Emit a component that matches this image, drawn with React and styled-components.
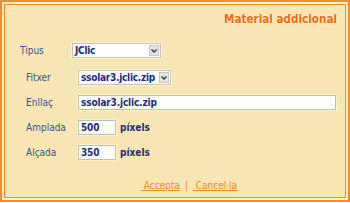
import React from 'react';
import styled, { createGlobalStyle } from 'styled-components';

const GlobalStyle = createGlobalStyle`
  html, body {
    margin: 0;
    padding: 0;
    background: #ffffff;
  }
  body {
    font-family: "DejaVu Sans Condensed", "DejaVu Sans", sans-serif;
  }
`

const Outer = styled.div`
  width: 350px;
  height: 202px;
  box-sizing: border-box;
  border: 2px solid #ff8a1e;
  background: #fdf0cc;
  padding: 2px;
`

const Inner = styled.div`
  height: 100%;
  box-sizing: border-box;
  border: 1px solid #ff8a1e;
  background: #f8e6b5;
  display: flex;
  flex-direction: column;
`

const Title = styled.h1`
  margin: 0;
  padding: 7px 8px 0 0;
  height: 20px;
  text-align: right;
  font-size: 11.6px;
  font-weight: bold;
  color: #ff6a00;
  text-shadow: 0 0 2px #fffbe8, 0 0 1px #fffbe8;
`

const Form = styled.div`
  display: flex;
  flex-direction: column;
  padding: 4px 0 0 15px;
`

const Row = styled.div`
  display: flex;
  align-items: center;
  height: ${({ h }) => h || 25}px;
  padding-left: ${({ indent }) => indent || 0}px;
`

const Label = styled.span`
  width: ${({ w }) => w}px;
  font-size: 10px;
  color: #34558a;
`

const Field = styled.input`
  box-sizing: border-box;
  width: ${({ w }) => w}px;
  height: 15px;
  padding: 0 2px;
  border: 1px solid #bdbdbd;
  outline: 1px solid #fff4c4;
  background: #ffffff;
  font-family: inherit;
  font-size: 10px;
  font-weight: bold;
  letter-spacing: -0.15px;
  color: #1e2a7a;
`

const SelectBox = styled.div`
  position: relative;
  box-sizing: border-box;
  width: ${({ w }) => w}px;
  height: 15px;
  border: 1px solid #c4c4c4;
  outline: 1px solid #fff4c4;
  background: #ffffff;
  display: flex;
  align-items: center;
  padding-left: 2px;
  font-size: 10px;
  font-weight: bold;
  letter-spacing: -0.25px;
  color: #1e2a7a;
  white-space: nowrap;
`

const ArrowButton = styled.span`
  position: absolute;
  right: 1px;
  top: 1px;
  width: 10px;
  height: 11px;
  box-sizing: border-box;
  border: 1px solid #c8c8c8;
  background: #e4e4e4;
  display: flex;
  align-items: center;
  justify-content: center;
`

const Unit = styled.span`
  margin-left: 4px;
  font-size: 10px;
  font-weight: bold;
  color: #1e2a7a;
`

const Footer = styled.div`
  margin-top: auto;
  padding: 0 0 6px 28px;
  display: flex;
  justify-content: center;
  align-items: center;
  gap: 5px;
  font-size: 10px;
  color: #ff8a1e;
`

const FooterLink = styled.a`
  color: #ff8a1e;
  text-decoration: underline;
  cursor: pointer;
`

const Select = ({ w, value }) => (
  <SelectBox w={w}>
    {value}
    <ArrowButton>
      <svg width="6" height="4" viewBox="0 0 6 4">
        <path d="M0.5 0.5 L3 3 L5.5 0.5" fill="none" stroke="#333" strokeWidth="1.3" />
      </svg>
    </ArrowButton>
  </SelectBox>
)

export default function App() {
  return (
    <>
      <GlobalStyle />
      <Outer>
        <Inner>
          <Title>Material addicional</Title>
          <Form>
            <Row h={29}>
              <Label w={52}>Tipus</Label>
              <Select w={89} value="JClic" />
            </Row>
            <Row indent={6}>
              <Label w={52}>Fitxer</Label>
              <Select w={93} value="ssolar3.jclic.zip" />
            </Row>
            <Row indent={6}>
              <Label w={52}>Enllaç</Label>
              <Field w={258} defaultValue="ssolar3.jclic.zip" />
            </Row>
            <Row indent={6}>
              <Label w={52}>Amplada</Label>
              <Field w={38} defaultValue="500" />
              <Unit>píxels</Unit>
            </Row>
            <Row indent={6}>
              <Label w={52}>Alçada</Label>
              <Field w={38} defaultValue="350" />
              <Unit>píxels</Unit>
            </Row>
          </Form>
          <Footer>
            <FooterLink>&nbsp;Accepta</FooterLink>
            <span>|</span>
            <FooterLink>&nbsp;Cancel·la</FooterLink>
          </Footer>
        </Inner>
      </Outer>
    </>
  );
}
